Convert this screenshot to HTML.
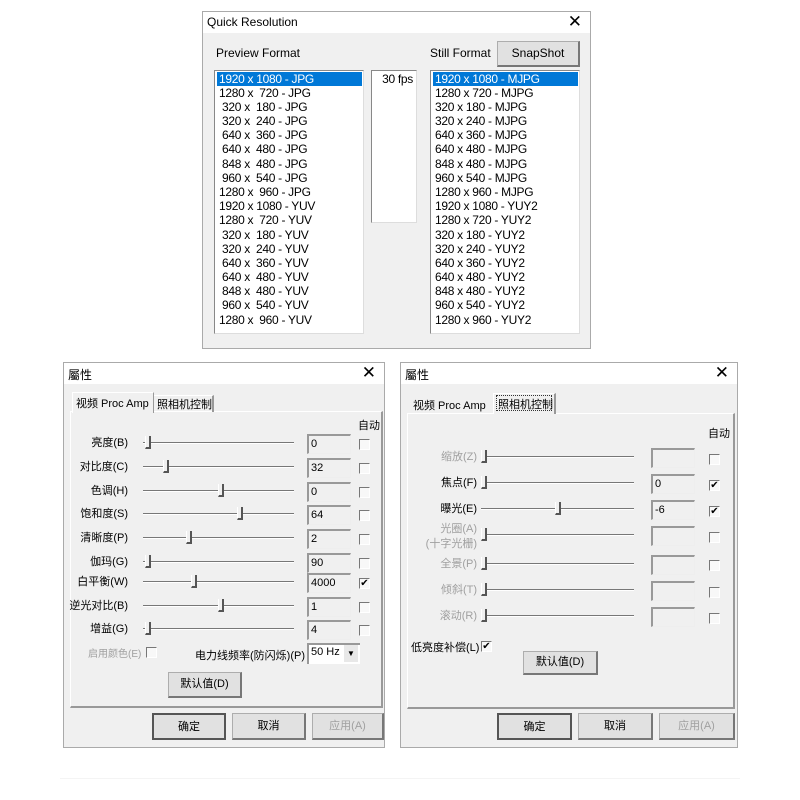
<!DOCTYPE html>
<html><head><meta charset="utf-8">
<style>
*{margin:0;padding:0;box-sizing:border-box}
body{width:800px;height:800px;background:#fff;position:relative;overflow:hidden;font-family:"Liberation Sans","Noto Sans CJK SC",sans-serif;font-size:12px;color:#000}
.a{position:absolute}
.dlg{position:absolute;background:#f0f0f0;border:1px solid #aaa}
.tb{position:absolute;left:0;right:0;top:0;height:21px;background:#fff}
.tt{position:absolute;left:4px;top:3px;font-size:12px}
.x{position:absolute;right:8px;top:0px;font-size:17px;font-weight:300}
.lb{position:absolute;background:#fff;border-top:1px solid #888;border-left:1px solid #888;border-right:1px solid #ddd;border-bottom:1px solid #ddd}
.row{position:absolute;left:2px;right:1px;height:14px;line-height:14px;padding-left:2px;white-space:pre;font-size:12px;letter-spacing:-0.3px}
.sel{background:#0078d7;color:#fff}
.btn{position:absolute;background:#e1e1e1;border:1px solid #adadad;border-right:2px solid #777;border-bottom:2px solid #777;text-align:center;font-size:12px}
.panel{position:absolute;border:1px solid #fff;border-right:2px solid #999;border-bottom:2px solid #999}
.lab{position:absolute;text-align:right;font-size:11px}
.dis{color:#a0a0a0}
.sl{position:absolute;height:2px;border-top:1px solid #777;border-bottom:1px solid #fff}
.th{position:absolute;width:6px;height:13px;margin-top:-1px;border-left:1px solid #fff;border-bottom:2px solid #555;border-right:2px solid #555;background:#f0f0f0}
.ed{position:absolute;width:44px;height:20px;border-top:2px solid #999;border-left:2px solid #999;border-right:1px solid #eee;border-bottom:1px solid #eee;padding-left:2px;font-size:11px;line-height:17px}
.cb{position:absolute;width:11px;height:11px;border-top:1px solid #777;border-left:1px solid #777;border-right:1px solid #fff;border-bottom:1px solid #fff;background:#f8f8f8;font-size:10px;line-height:10px;text-align:center}
</style></head><body>

<div class="dlg" style="left:202px;top:11px;width:389px;height:338px">
 <div class="tb"><div class="tt">Quick Resolution</div><div class="x">✕</div></div>
 <div class="a" style="left:13px;top:34px">Preview Format</div>
 <div class="a" style="left:227px;top:34px">Still Format</div>
 <div class="btn" style="left:294px;top:29px;width:83px;height:26px;line-height:23px;font-size:12px">SnapShot</div>
 <div class="lb" style="left:11px;top:58px;width:150px;height:264px">
  <div class="row sel" style="top:1px">1920 x 1080 - JPG</div>
  <div class="row" style="top:15px">1280 x  720 - JPG</div>
  <div class="row" style="top:29px"> 320 x  180 - JPG</div>
  <div class="row" style="top:43px"> 320 x  240 - JPG</div>
  <div class="row" style="top:57px"> 640 x  360 - JPG</div>
  <div class="row" style="top:71px"> 640 x  480 - JPG</div>
  <div class="row" style="top:86px"> 848 x  480 - JPG</div>
  <div class="row" style="top:100px"> 960 x  540 - JPG</div>
  <div class="row" style="top:114px">1280 x  960 - JPG</div>
  <div class="row" style="top:128px">1920 x 1080 - YUV</div>
  <div class="row" style="top:142px">1280 x  720 - YUV</div>
  <div class="row" style="top:157px"> 320 x  180 - YUV</div>
  <div class="row" style="top:171px"> 320 x  240 - YUV</div>
  <div class="row" style="top:185px"> 640 x  360 - YUV</div>
  <div class="row" style="top:199px"> 640 x  480 - YUV</div>
  <div class="row" style="top:213px"> 848 x  480 - YUV</div>
  <div class="row" style="top:227px"> 960 x  540 - YUV</div>
  <div class="row" style="top:242px">1280 x  960 - YUV</div>
 </div>
 <div class="lb" style="left:168px;top:58px;width:46px;height:153px">
  <div class="row" style="top:1px;text-align:right;padding-right:2px">30 fps</div>
 </div>
 <div class="lb" style="left:227px;top:58px;width:150px;height:264px">
  <div class="row sel" style="top:1px">1920 x 1080 - MJPG</div>
  <div class="row" style="top:15px">1280 x 720 - MJPG</div>
  <div class="row" style="top:29px">320 x 180 - MJPG</div>
  <div class="row" style="top:43px">320 x 240 - MJPG</div>
  <div class="row" style="top:57px">640 x 360 - MJPG</div>
  <div class="row" style="top:71px">640 x 480 - MJPG</div>
  <div class="row" style="top:86px">848 x 480 - MJPG</div>
  <div class="row" style="top:100px">960 x 540 - MJPG</div>
  <div class="row" style="top:114px">1280 x 960 - MJPG</div>
  <div class="row" style="top:128px">1920 x 1080 - YUY2</div>
  <div class="row" style="top:142px">1280 x 720 - YUY2</div>
  <div class="row" style="top:157px">320 x 180 - YUY2</div>
  <div class="row" style="top:171px">320 x 240 - YUY2</div>
  <div class="row" style="top:185px">640 x 360 - YUY2</div>
  <div class="row" style="top:199px">640 x 480 - YUY2</div>
  <div class="row" style="top:213px">848 x 480 - YUY2</div>
  <div class="row" style="top:227px">960 x 540 - YUY2</div>
  <div class="row" style="top:242px">1280 x 960 - YUY2</div>
 </div>
</div>

<div class="dlg" style="left:63px;top:362px;width:322px;height:386px">
 <div class="tb"><div class="tt">屬性</div><div class="x">✕</div></div>
 <div class="panel" style="left:6px;top:48px;width:313px;height:297px"></div>
 <div class="a" style="left:8px;top:29px;width:82px;height:21px;background:#f0f0f0;border-top:1px solid #fff;border-left:1px solid #fff;border-right:1px solid #999"></div>
 <div class="a" style="left:12px;top:32px;font-size:11px">视频 Proc Amp</div>
 <div class="a" style="left:90px;top:32px;width:60px;height:17px;border-top:1px solid #fff;border-right:2px solid #999"></div>
 <div class="a" style="left:93px;top:33px;font-size:11px">照相机控制</div>
 <div class="a" style="left:294px;top:54px;font-size:11px">自动</div>
 <div class="lab" style="right:256px;top:71px">亮度(B)</div><div class="sl" style="left:79px;top:79px;width:151px"></div><div class="th" style="left:81px;top:74px"></div><div class="ed" style="left:243px;top:71px">0</div><div class="cb" style="left:295px;top:76px"></div>
 <div class="lab" style="right:256px;top:95px">对比度(C)</div><div class="sl" style="left:79px;top:103px;width:151px"></div><div class="th" style="left:99px;top:98px"></div><div class="ed" style="left:243px;top:95px">32</div><div class="cb" style="left:295px;top:100px"></div>
 <div class="lab" style="right:256px;top:119px">色调(H)</div><div class="sl" style="left:79px;top:127px;width:151px"></div><div class="th" style="left:154px;top:122px"></div><div class="ed" style="left:243px;top:119px">0</div><div class="cb" style="left:295px;top:124px"></div>
 <div class="lab" style="right:256px;top:142px">饱和度(S)</div><div class="sl" style="left:79px;top:150px;width:151px"></div><div class="th" style="left:173px;top:145px"></div><div class="ed" style="left:243px;top:142px">64</div><div class="cb" style="left:295px;top:147px"></div>
 <div class="lab" style="right:256px;top:166px">清晰度(P)</div><div class="sl" style="left:79px;top:174px;width:151px"></div><div class="th" style="left:122px;top:169px"></div><div class="ed" style="left:243px;top:166px">2</div><div class="cb" style="left:295px;top:171px"></div>
 <div class="lab" style="right:256px;top:190px">伽玛(G)</div><div class="sl" style="left:79px;top:198px;width:151px"></div><div class="th" style="left:81px;top:193px"></div><div class="ed" style="left:243px;top:190px">90</div><div class="cb" style="left:295px;top:195px"></div>
 <div class="lab" style="right:256px;top:210px">白平衡(W)</div><div class="sl" style="left:79px;top:218px;width:151px"></div><div class="th" style="left:127px;top:213px"></div><div class="ed" style="left:243px;top:210px">4000</div><div class="cb" style="left:295px;top:215px">✔</div>
 <div class="lab" style="right:256px;top:234px">逆光对比(B)</div><div class="sl" style="left:79px;top:242px;width:151px"></div><div class="th" style="left:154px;top:237px"></div><div class="ed" style="left:243px;top:234px">1</div><div class="cb" style="left:295px;top:239px"></div>
 <div class="lab" style="right:256px;top:257px">增益(G)</div><div class="sl" style="left:79px;top:265px;width:151px"></div><div class="th" style="left:81px;top:260px"></div><div class="ed" style="left:243px;top:257px">4</div><div class="cb" style="left:295px;top:262px"></div>
 <div class="lab dis" style="left:24px;top:282px;font-size:10px">启用颜色(E)</div><div class="cb" style="left:82px;top:284px"></div>
 <div class="lab" style="left:131px;top:284px;font-size:11px">电力线频率(防闪烁)(P)</div>
 <div class="a" style="left:243px;top:280px;width:53px;height:21px;background:#fff;border-top:2px solid #999;border-left:2px solid #999;font-size:11px;padding:1px 2px">50 Hz</div>
 <div class="a" style="left:280px;top:282px;width:14px;height:17px;background:#e8e8e8;font-size:8px;text-align:center;line-height:17px">▼</div>
 <div class="btn" style="left:104px;top:309px;width:74px;height:26px;line-height:23px;font-size:11px">默认值(D)</div>
 <div class="btn" style="left:88px;top:350px;width:74px;height:27px;line-height:24px;border:2px solid #555;font-size:11px">确定</div>
 <div class="btn" style="left:168px;top:350px;width:74px;height:27px;line-height:24px;font-size:11px">取消</div>
 <div class="btn" style="left:248px;top:350px;width:72px;height:27px;line-height:24px;color:#a0a0a0;font-size:11px">应用(A)</div>
</div>

<div class="dlg" style="left:400px;top:362px;width:338px;height:386px">
 <div class="tb"><div class="tt">屬性</div><div class="x">✕</div></div>
 <div class="panel" style="left:6px;top:50px;width:328px;height:296px"></div>
 <div class="a" style="left:12px;top:34px;font-size:11px">视频 Proc Amp</div>
 <div class="a" style="left:92px;top:30px;width:63px;height:21px;background:#f0f0f0;border-top:1px solid #fff;border-left:1px solid #fff;border-right:2px solid #999"></div>
 <div class="a" style="left:95px;top:32px;width:56px;height:16px;border:1px dotted #333"></div>
 <div class="a" style="left:97px;top:33px;font-size:11px">照相机控制</div>
 <div class="a" style="left:307px;top:62px;font-size:11px">自动</div>
 <div class="lab dis" style="right:260px;top:85px">缩放(Z)</div><div class="sl" style="left:80px;top:93px;width:153px"></div><div class="th" style="left:80px;top:88px"></div><div class="ed" style="left:250px;top:85px"></div><div class="cb" style="left:308px;top:91px"></div>
 <div class="lab" style="right:260px;top:111px">焦点(F)</div><div class="sl" style="left:80px;top:119px;width:153px"></div><div class="th" style="left:80px;top:114px"></div><div class="ed" style="left:250px;top:111px">0</div><div class="cb" style="left:308px;top:117px">✔</div>
 <div class="lab" style="right:260px;top:137px">曝光(E)</div><div class="sl" style="left:80px;top:145px;width:153px"></div><div class="th" style="left:154px;top:140px"></div><div class="ed" style="left:250px;top:137px">-6</div><div class="cb" style="left:308px;top:143px">✔</div>
 <div class="lab dis" style="right:260px;top:159px;line-height:15px">光圈(A)<br>(十字光栅)</div><div class="sl" style="left:80px;top:171px;width:153px"></div><div class="th" style="left:80px;top:166px"></div><div class="ed" style="left:250px;top:163px"></div><div class="cb" style="left:308px;top:169px"></div>
 <div class="lab dis" style="right:260px;top:192px">全景(P)</div><div class="sl" style="left:80px;top:200px;width:153px"></div><div class="th" style="left:80px;top:195px"></div><div class="ed" style="left:250px;top:192px"></div><div class="cb" style="left:308px;top:197px"></div>
 <div class="lab dis" style="right:260px;top:218px">倾斜(T)</div><div class="sl" style="left:80px;top:226px;width:153px"></div><div class="th" style="left:80px;top:221px"></div><div class="ed" style="left:250px;top:218px"></div><div class="cb" style="left:308px;top:224px"></div>
 <div class="lab dis" style="right:260px;top:244px">滚动(R)</div><div class="sl" style="left:80px;top:252px;width:153px"></div><div class="th" style="left:80px;top:247px"></div><div class="ed" style="left:250px;top:244px"></div><div class="cb" style="left:308px;top:250px"></div>
 <div class="lab" style="left:10px;top:276px;font-size:11px">低亮度补偿(L)</div><div class="cb" style="left:80px;top:278px">✔</div>
 <div class="btn" style="left:122px;top:288px;width:75px;height:24px;line-height:21px;font-size:11px">默认值(D)</div>
 <div class="btn" style="left:96px;top:350px;width:75px;height:27px;line-height:24px;border:2px solid #555;font-size:11px">确定</div>
 <div class="btn" style="left:177px;top:350px;width:75px;height:27px;line-height:24px;font-size:11px">取消</div>
 <div class="btn" style="left:258px;top:350px;width:76px;height:27px;line-height:24px;color:#a0a0a0;font-size:11px">应用(A)</div>
</div>
<div class="a" style="left:60px;top:778px;width:680px;height:1px;background:#f4f4f4"></div>
</body></html>
